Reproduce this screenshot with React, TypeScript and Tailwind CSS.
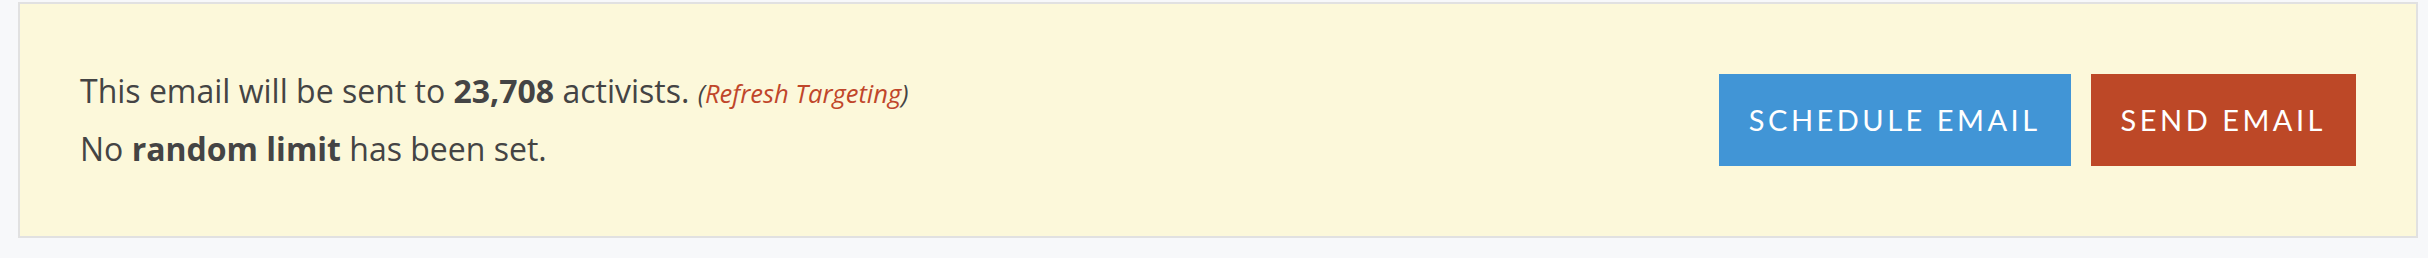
import React from 'react';

export default function App() {
  return (
    <div className="min-h-[258px] bg-[#f7f8fa] pt-[2px] pl-[18px] pr-[10px]">
      <div className="flex items-center justify-between border-2 border-[#e1e1e1] bg-[#fcf8da] px-[60px] py-[59px]">
        <div className="text-[32px] leading-[56px] text-[#444444] font-['Open_Sans',sans-serif]">
          <p>
            This email will be sent to <strong className="font-bold">23,708</strong> activists.{' '}
            <span className="text-[25.5px] italic">
              (<a className="text-[#c0462a] cursor-pointer">Refresh Targeting</a>)
            </span>
          </p>
          <p>
            No <strong className="font-bold">random limit</strong> has been set.
          </p>
        </div>
        <div className="flex gap-[20px]">
          <button className="h-[92px] bg-[#4195d6] px-[30px] font-['Lato',sans-serif] text-[29px] uppercase tracking-[3.5px] text-white">
            Schedule Email
          </button>
          <button className="h-[92px] bg-[#bd4827] px-[30px] font-['Lato',sans-serif] text-[29px] uppercase tracking-[3.5px] text-white">
            Send Email
          </button>
        </div>
      </div>
    </div>
  );
}
